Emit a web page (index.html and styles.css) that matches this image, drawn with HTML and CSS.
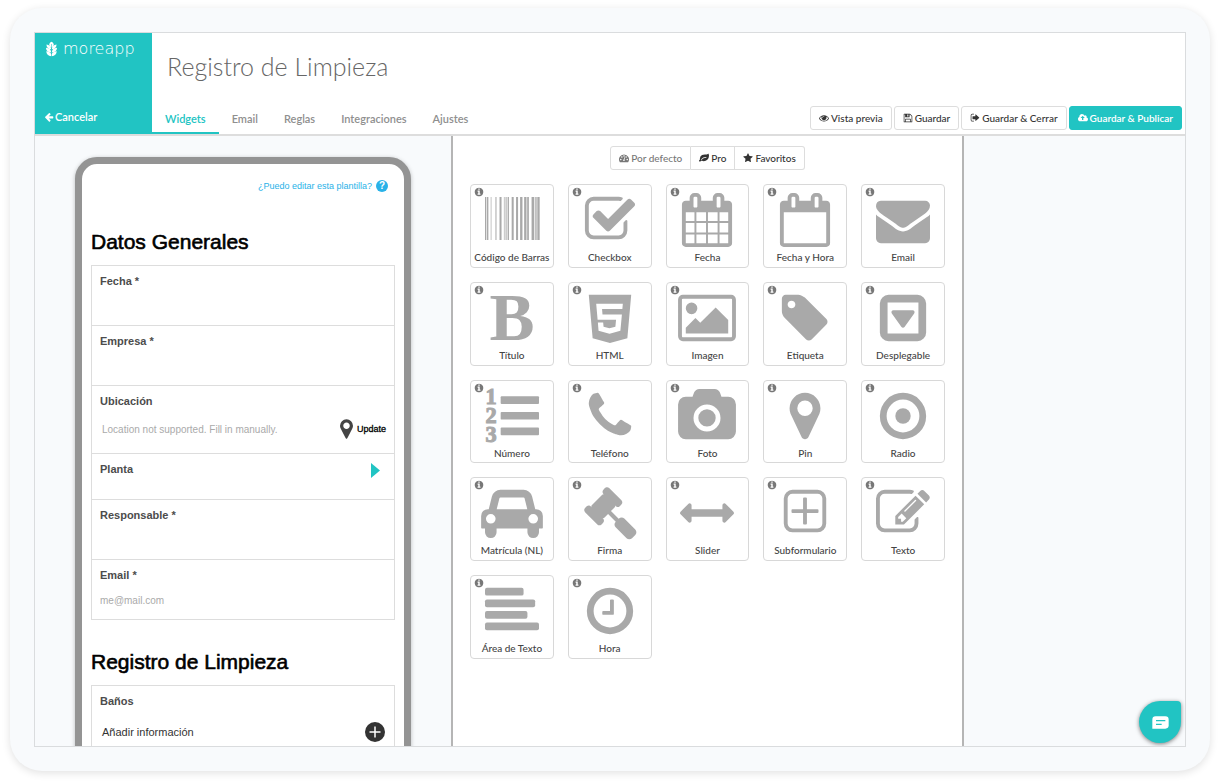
FILE: index.html
```html
<!DOCTYPE html>
<html lang="es">
<head>
<meta charset="utf-8">
<meta name="viewport" content="width=device-width, initial-scale=1">
<title>Registro de Limpieza</title>
<link rel="stylesheet" href="styles.css">
</head>
<body>
<svg class="sprite" aria-hidden="true">
  <symbol id="info" viewBox="0 0 1792 1792"><path d="M1152 1376v-160q0-14-9-23t-23-9h-96v-512q0-14-9-23t-23-9h-320q-14 0-23 9t-9 23v160q0 14 9 23t23 9h96v320h-96q-14 0-23 9t-9 23v160q0 14 9 23t23 9h448q14 0 23-9t9-23zm-128-896v-160q0-14-9-23t-23-9h-192q-14 0-23 9t-9 23v160q0 14 9 23t23 9h192q14 0 23-9t9-23zm640 416q0 209-103 385.5t-279.5 279.5-385.5 103-385.5-103-279.5-279.5-103-385.5 103-385.5 279.5-279.5 385.5-103 385.5 103 279.5 279.5 103 385.5z"/></symbol>
</svg>
<div class="card">
  <div class="window">
    <header class="header">
      <div class="brand">
        <div class="logo">
          <svg class="logo-mark" viewBox="0 0 24 32" aria-hidden="true">
            <path d="M12 0c3 1.500 5 4 5 6.500S15 11 12.600 12.500V5h-1.200v7.500C9 11 7 9 7 6.500S9 1.500 12 0z"/>
            <path d="M1 6c6 .5 10 4 10.300 10.500C5.500 16.300 1 12.500 1 6zM23 6c-6 .5-10 4-10.300 10.500C18.500 16.300 23 12.500 23 6z"/>
            <path d="M0 13.500c7 .3 11 4 11.300 10C5 23.500 0 20 0 13.500zM24 13.500c-7 .3-11 4-11.300 10C19 23.500 24 20 24 13.500z"/>
            <path d="M.5 21c6 .3 10.300 3 10.800 6.500V32C5 31 1 27 .5 21zM23.500 21c-6 .3-10.300 3-10.800 6.500V32c6.300-1 10.300-5 10.800-11z"/>
          </svg>
          <span>moreapp</span>
        </div>
        <a class="cancel" href="#"><svg viewBox="0 0 1792 1792" aria-hidden="true"><path d="M1664 896v128q0 53-32.500 90.500t-84.500 37.500h-704l293 294q38 36 38 90t-38 90l-75 76q-37 37-90 37-52 0-91-37l-651-652q-37-37-37-90 0-52 37-91l651-650q38-38 91-38 52 0 90 38l75 74q38 38 38 91t-38 91l-293 293h704q52 0 84.500 37.500t32.500 90.500z"/></svg>Cancelar</a>
      </div>
      <div class="head-main">
        <h1>Registro de Limpieza</h1>
        <div class="head-row">
          <nav class="tabs">
            <a class="active" href="#">Widgets</a><a href="#">Email</a><a href="#">Reglas</a><a href="#">Integraciones</a><a href="#">Ajustes</a>
          </nav>
          <div class="actions">
            <button type="button" class="btn"><svg viewBox="0 0 1792 1792" aria-hidden="true"><path d="M1664 960q-152-236-381-353 61 104 61 225 0 185-131.500 316.500t-316.500 131.500-316.500-131.500-131.500-316.500q0-121 61-225-229 117-381 353 133 205 333.500 326.500t434.500 121.500 434.500-121.500 333.500-326.500zm-720-384q0-20-14-34t-34-14q-125 0-214.500 89.500t-89.500 214.500q0 20 14 34t34 14 34-14 14-34q0-86 61-147t147-61q20 0 34-14t14-34zm848 384q0 34-20 69-140 230-376.500 368.500t-499.500 138.500-499.500-139-376.500-368q-20-35-20-69t20-69q140-229 376.500-368t499.500-139 499.500 139 376.500 368q20 35 20 69z"/></svg>Vista previa</button>
            <button type="button" class="btn"><svg viewBox="0 0 1792 1792" aria-hidden="true"><path fill-rule="evenodd" d="M224 128h960q80 0 136 56l288 288q56 56 56 136v960q0 96-96 96H224q-96 0-96-96V224q0-96 96-96zM256 256v1280h128v-416q0-96 96-96h832q96 0 96 96v416h128V608q0-28-20-48l-284-284q-20-20-48-20v416q0 96-96 96H480q-96 0-96-96V256zM512 1152v384h768v-384zM768 256v384h192V256z"/></svg>Guardar</button>
            <button type="button" class="btn"><svg viewBox="0 0 1792 1792" aria-hidden="true"><path d="M704 256H416a160 160 0 0 0-160 160v832a160 160 0 0 0 160 160h288v128H416a288 288 0 0 1-288-288V416a288 288 0 0 1 288-288h288z"/><path d="M1060 260l580 530q42 42 0 84l-580 530q-100 60-100-44v-256H512q-64 0-64-64V624q0-64 64-64h448V304q0-104 100-44z"/></svg>Guardar &amp; Cerrar</button>
            <button type="button" class="btn primary"><svg viewBox="-64 0 1920 1792" aria-hidden="true"><path d="M1216 864q0-14-9-23l-352-352q-9-9-23-9t-23 9l-351 351q-10 12-10 24 0 14 9 23t23 9h224v352q0 13 9.500 22.500t22.500 9.500h192q13 0 22.500-9.500t9.500-22.500v-352h224q13 0 22.500-9.500t9.500-22.500zm640 288q0 159-112.500 271.500t-271.500 112.500h-1088q-185 0-316.500-131.500t-131.500-316.500q0-130 70-240t188-165q-2-30-2-43 0-212 150-362t362-150q156 0 285.500 87t188.500 231q71-62 166-62 106 0 181 75t75 181q0 76-41 138 130 31 213.500 135.500t83.500 238.500z"/></svg>Guardar &amp; Publicar</button>
          </div>
        </div>
      </div>
    </header>

    <main class="workspace">
      <section class="preview">
        <form class="phone">
          <a class="help" href="#">¿Puedo editar esta plantilla?<span class="help-mark">?</span></a>
          <h2>Datos Generales</h2>
          <div class="group">
            <div class="field"><label for="fecha">Fecha *</label><input id="fecha" type="text"></div>
            <div class="field"><label for="empresa">Empresa *</label><input id="empresa" type="text"></div>
            <div class="field location">
              <label for="ubicacion">Ubicación</label>
              <div class="line">
                <input id="ubicacion" type="text" placeholder="Location not supported. Fill in manually.">
                <button type="button" class="update"><svg viewBox="384 128 1024 1536" aria-hidden="true"><path d="M1152 640q0-106-75-181t-181-75-181 75-75 181 75 181 181 75 181-75 75-181zm256 0q0 109-63 229l-364 724q-16 33-37.500 52t-47.500 19-47.500-19-36.500-52l-365-724q-63-120-63-229 0-212 150-362t362-150 362 150 150 362z"/></svg>Update</button>
              </div>
            </div>
            <div class="field planta"><span class="name">Planta</span><svg class="arrow" viewBox="0 0 9 15" aria-hidden="true"><path d="M0 0l9 7.500-9 7.500z"/></svg></div>
            <div class="field"><label for="responsable">Responsable *</label><input id="responsable" type="text"></div>
            <div class="field"><label for="correo">Email *</label><input id="correo" type="email" placeholder="me@mail.com"></div>
          </div>
          <h2>Registro de Limpieza</h2>
          <div class="group">
            <div class="field banos">
              <span class="name">Baños</span>
              <button type="button" class="add">Añadir información<svg viewBox="0 0 20 20" aria-hidden="true"><circle cx="10" cy="10" r="10"/><path d="M10 4.500v11M4.500 10h11"/></svg></button>
            </div>
          </div>
        </form>
      </section>

      <section class="palette">
        <div class="filters">
          <button type="button" class="current"><svg viewBox="0 0 1792 1792" aria-hidden="true"><path fill-rule="evenodd" d="M896 256a896 896 0 0 1 760 1370q-20 38-64 38H200q-44 0-64-38A896 896 0 0 1 896 256zM320 1024a128 128 0 1 0 .1 0zM512 576a128 128 0 1 0 .1 0zM896 384a128 128 0 1 0 .1 0zM1280 576a128 128 0 1 0 .1 0zM1472 1024a128 128 0 1 0 .1 0zM960 760l-100 400a140 140 0 1 0 120 30l100-400z"/></svg>Por defecto</button>
          <button type="button"><svg viewBox="0 0 1792 1792" aria-hidden="true"><path fill-rule="evenodd" d="M1740 250q50 100 52 240 0 450-300 740-260 250-640 250-160 0-320-70-90-40-150-40-40 0-110 90t-120 90q-60 0-100-60-52-80-52-120 0-50 90-120t90-110q-20-70-20-140 0-420 380-620 210-110 520-110 350 0 530-110 60-40 80-40 40 0 70 30zM1280 700q-560 0-900 400-40 50-40 80 0 50 60 50 30 0 60-30 330-360 820-370 64 0 64-64t-64-66z"/></svg>Pro</button>
          <button type="button"><svg viewBox="0 0 1792 1792" aria-hidden="true"><path d="M1728 647q0 22-26 48l-363 354 86 500q1 7 1 20 0 21-10.500 35.500t-30.500 14.500q-19 0-40-12l-449-236-449 236q-22 12-40 12-21 0-31.500-14.500t-10.500-35.500q0-6 2-20l86-500-364-354q-25-27-25-48 0-37 56-46l502-73 225-455q19-41 49-41t49 41l225 455 502 73q56 9 56 46z"/></svg>Favoritos</button>
        </div>
        <div class="tiles">
          <button type="button" class="tile"><svg class="info"><use href="#info"/></svg><svg class="icon" viewBox="46 28 160 160"><path d="M46 40h4v127h-4zM52 40h4v127h-4zM63 40h2v127h-2zM77 40h3v127h-3zM89 40h6v127h-6zM102 40h2v127h-2zM107 40h3v127h-3zM113 40h4v127h-4zM125 40h6v127h-6zM138 40h6v127h-6zM150 40h7v127h-7zM162 40h7v127h-7zM171 40h5v127h-5zM184 40h8v127h-8zM195 40h4v127h-4zM201 40h7v127h-7z"/></svg><span>Código de Barras</span></button>
          <button type="button" class="tile"><svg class="info"><use href="#info"/></svg><svg class="icon" viewBox="0 0 1792 1792"><path d="M1472 930v318q0 119-84.500 203.500t-203.500 84.500h-832q-119 0-203.500-84.500t-84.500-203.500v-832q0-119 84.500-203.500t203.500-84.500h832q63 0 117 25 15 7 18 23 3 17-9 29l-49 49q-10 10-23 10-3 0-9-2-23-6-45-6h-832q-66 0-113 47t-47 113v832q0 66 47 113t113 47h832q66 0 113-47t47-113v-254q0-13 9-22l64-64q10-10 23-10 6 0 12 3 20 8 20 29zm231-489l-814 814q-24 24-57 24t-57-24l-430-430q-24-24-24-57t24-57l110-110q24-24 57-24t57 24l263 263 647-647q24-24 57-24t57 24l110 110q24 24 24 57t-24 57z"/></svg><span>Checkbox</span></button>
          <button type="button" class="tile"><svg class="info"><use href="#info"/></svg><svg class="icon" viewBox="0 0 1792 1792"><path d="M192 1664h288v-288h-288v288zm352 0h320v-288h-320v288zm-352-352h288v-320h-288v320zm352 0h320v-320h-320v320zm-352-384h288v-288h-288v288zm736 736h320v-288h-320v288zm-384-736h320v-288h-320v288zm768 736h288v-288h-288v288zm-384-352h320v-320h-320v320zm-352-864v-288q0-13-9.500-22.500t-22.500-9.500h-64q-13 0-22.500 9.500t-9.500 22.500v288q0 13 9.500 22.500t22.500 9.500h64q13 0 22.500-9.500t9.500-22.500zm736 864h288v-320h-288v320zm-384-384h320v-288h-320v288zm384 0h288v-288h-288v288zm32-480v-288q0-13-9.500-22.500t-22.500-9.500h-64q-13 0-22.500 9.500t-9.500 22.500v288q0 13 9.500 22.500t22.500 9.500h64q13 0 22.500-9.500t9.500-22.500zm384-64v1280q0 52-38 90t-90 38h-1408q-52 0-90-38t-38-90v-1280q0-52 38-90t90-38h128v-96q0-66 47-113t113-47h64q66 0 113 47t47 113v96h384v-96q0-66 47-113t113-47h64q66 0 113 47t47 113v96h128q52 0 90 38t38 90z"/></svg><span>Fecha</span></button>
          <button type="button" class="tile"><svg class="info"><use href="#info"/></svg><svg class="icon" viewBox="0 0 1792 1792"><path d="M192 1664h1408v-1024h-1408v1024zm384-1216v-288q0-14-9-23t-23-9h-64q-14 0-23 9t-9 23v288q0 14 9 23t23 9h64q14 0 23-9t9-23zm768 0v-288q0-14-9-23t-23-9h-64q-14 0-23 9t-9 23v288q0 14 9 23t23 9h64q14 0 23-9t9-23zm384-64v1280q0 52-38 90t-90 38h-1408q-52 0-90-38t-38-90v-1280q0-52 38-90t90-38h128v-96q0-66 47-113t113-47h64q66 0 113 47t47 113v96h384v-96q0-66 47-113t113-47h64q66 0 113 47t47 113v96h128q52 0 90 38t38 90z"/></svg><span>Fecha y Hora</span></button>
          <button type="button" class="tile"><svg class="info"><use href="#info"/></svg><svg class="icon" viewBox="0 0 1792 1792"><path d="M1792 710v794q0 66-47 113t-113 47h-1472q-66 0-113-47t-47-113v-794q44 49 101 87 362 246 497 345 57 42 92.500 65.500t94.500 48 110 24.500h2q51 0 110-24.500t94.500-48 92.500-65.500q170-123 498-345 57-39 100-87zm0-294q0 79-49 151t-122 123q-376 261-468 325-10 7-42.500 31t-54 38.500-52 32.500-57.500 27-50 9h-2q-23 0-50-9t-57.500-27-52-32.500-54-38.500-42.500-31q-91-64-262-182.500t-205-142.500q-62-42-117-115.500t-55-136.500q0-78 41.500-130t118.500-52h1472q65 0 112.500 47t47.500 113z"/></svg><span>Email</span></button>

          <button type="button" class="tile"><svg class="info"><use href="#info"/></svg><svg class="icon" viewBox="0 0 1792 1792"><text class="bold-mark" x="896" y="1640">B</text></svg><span>Título</span></button>
          <button type="button" class="tile"><svg class="info"><use href="#info"/></svg><svg class="icon" viewBox="0 0 1792 1792"><path d="M1322 422H438l47 534h612l-22 228-197 53-196-53-13-140H494l22 278 362 100h4v-1l359-99 50-544H647l-15-181h674zM192 128h1408l-128 1438-578 162-574-162z"/></svg><span>HTML</span></button>
          <button type="button" class="tile"><svg class="info"><use href="#info"/></svg><svg class="icon" viewBox="0 0 1792 1792"><path d="M576 576q0 80-56 136t-136 56-136-56-56-136 56-136 136-56 136 56 56 136zm1024 384v448h-1408v-192l320-320 160 160 512-512zm96-704h-1600q-13 0-22.500 9.500t-9.500 22.500v1216q0 13 9.500 22.500t22.500 9.500h1600q13 0 22.500-9.500t9.500-22.500v-1216q0-13-9.500-22.500t-22.500-9.500zm160 32v1216q0 66-47 113t-113 47h-1600q-66 0-113-47t-47-113v-1216q0-66 47-113t113-47h1600q66 0 113 47t47 113z"/></svg><span>Imagen</span></button>
          <button type="button" class="tile"><svg class="info"><use href="#info"/></svg><svg class="icon" viewBox="0 0 1792 1792"><path d="M576 448q0-53-37.500-90.500t-90.500-37.500-90.500 37.500-37.500 90.500 37.500 90.500 90.500 37.500 90.500-37.500 37.500-90.500zm1067 576q0 53-37 90l-491 492q-39 37-91 37-53 0-90-37l-715-716q-38-37-64.500-101t-26.500-117v-416q0-52 38-90t90-38h416q53 0 117 26.500t102 64.500l715 714q37 39 37 91z"/></svg><span>Etiqueta</span></button>
          <button type="button" class="tile"><svg class="info"><use href="#info"/></svg><svg class="icon" viewBox="0 0 1792 1792"><path fill-rule="evenodd" d="M416 128h960a288 288 0 0 1 288 288v960a288 288 0 0 1-288 288H416a288 288 0 0 1-288-288V416a288 288 0 0 1 288-288zM384 384v1024h1024V384z"/><path d="M576 640h640q40 0 57 35 18 35-6 68l-320 448q-19 27-51 27t-51-27l-320-448q-24-33-6-68 17-35 57-35z"/></svg><span>Desplegable</span></button>

          <button type="button" class="tile"><svg class="info"><use href="#info"/></svg><svg class="icon" viewBox="0 0 1792 1792"><g class="digits"><text x="200" y="500">1</text><text x="200" y="1136">2</text><text x="200" y="1764">3</text></g><rect x="520" y="240" width="1272" height="256" rx="32"/><rect x="520" y="760" width="1272" height="256" rx="32"/><rect x="520" y="1276" width="1272" height="256" rx="32"/></svg><span>Número</span></button>
          <button type="button" class="tile"><svg class="info"><use href="#info"/></svg><svg class="icon" viewBox="0 0 1792 1792"><path d="M1600 1240q0 27-10 70.500t-21 68.500q-21 50-122 106-94 51-186 51-27 0-53-3.500t-57.500-12.500-47-14.500-55.500-20.500-49-18q-98-35-175-83-127-79-264-216t-216-264q-48-77-83-175-3-9-18-49t-20.500-55.500-14.500-47-12.500-57.500-3.500-53q0-92 51-186 56-101 106-122 25-11 68.500-21t70.500-10q14 0 21 3 18 6 53 76 11 19 30 54t35 63.500 31 53.500q3 4 17.500 25t21.500 35.500 7 28.500q0 20-28.500 50t-62 55-62 53-28.500 46q0 9 5 22.500t8.500 20.500 14 24 11.500 19q76 137 174 235t235 174q2 1 19 11.500t24 14 20.500 8.500 22.500 5q18 0 46-28.500t53-62 55-62 50-28.500q14 0 28.500 7t35.500 21.500 25 17.500q25 15 53.500 31t63.500 35 54 30q70 35 76 53 3 7 3 21z"/></svg><span>Teléfono</span></button>
          <button type="button" class="tile"><svg class="info"><use href="#info"/></svg><svg class="icon" viewBox="0 0 1792 1792"><path d="M896 672q119 0 203.500 84.500t84.500 203.500-84.500 203.500-203.500 84.500-203.500-84.500-84.500-203.500 84.500-203.500 203.500-84.500zm704-416q106 0 181 75t75 181v896q0 106-75 181t-181 75h-1408q-106 0-181-75t-75-181v-896q0-106 75-181t181-75h224l51-136q19-49 69.500-84.500t103.500-35.500h512q53 0 103.500 35.500t69.500 84.500l51 136h224zm-704 1152q185 0 316.500-131.500t131.500-316.500-131.500-316.500-316.500-131.500-316.500 131.500-131.500 316.500 131.500 316.500 316.500 131.500z"/></svg><span>Foto</span></button>
          <button type="button" class="tile"><svg class="info"><use href="#info"/></svg><svg class="icon" viewBox="0 0 1792 1792"><path d="M1152 640q0-106-75-181t-181-75-181 75-75 181 75 181 181 75 181-75 75-181zm256 0q0 109-33 179l-364 774q-16 33-47.500 52t-67.500 19-67.500-19-46.500-52l-365-774q-33-70-33-179 0-212 150-362t362-150 362 150 150 362z"/></svg><span>Pin</span></button>
          <button type="button" class="tile"><svg class="info"><use href="#info"/></svg><svg class="icon" viewBox="0 0 1792 1792"><circle class="ring" cx="896" cy="896" r="656"/><circle cx="896" cy="896" r="256"/></svg><span>Radio</span></button>

          <button type="button" class="tile"><svg class="info"><use href="#info"/></svg><svg class="icon" viewBox="128 0 1792 1792"><path d="M480 1088q0-66-47-113t-113-47-113 47-47 113 47 113 113 47 113-47 47-113zm36-320h1016l-89-357q-2-8-14-17.500t-21-9.500h-768q-9 0-21 9.500t-14 17.500zm1372 320q0-66-47-113t-113-47-113 47-47 113 47 113 113 47 113-47 47-113zm160-96v384q0 14-9 23t-23 9h-96v128q0 80-56 136t-136 56-136-56-56-136v-128h-1024v128q0 80-56 136t-136 56-136-56-56-136v-128h-96q-14 0-23-9t-9-23v-384q0-93 65.500-158.500t158.500-65.500h28l105-419q23-94 104-157.500t179-63.500h768q98 0 179 63.500t104 157.500l105 419h28q93 0 158.500 65.500t65.500 158.500z"/></svg><span>Matrícula (NL)</span></button>
          <button type="button" class="tile"><svg class="info"><use href="#info"/></svg><svg class="icon" viewBox="0 0 1792 1792"><path d="M1771 1536q0 53-37 90l-107 108q-39 37-91 37-53 0-90-37l-363-364q-38-36-38-90 0-53 43-96l-256-256-126 126q-14 14-34 14t-34-14q2 2 12.500 12t12.500 13 10 11.500 10 13.500 6 13.500 5.500 16.500 1.500 18q0 38-28 68-3 3-16.500 18t-19 20.500-18.500 16.500-22 15.500-22 9-26 4.500q-40 0-68-28l-408-408q-28-28-28-68 0-13 4.500-26t9-22 15.500-22 16.500-18.500 20.500-19 18-16.500q30-28 68-28 10 0 18 1.500t16.500 5.500 13.500 6 13.500 10 11.500 10 13 12.500 12 12.500q-14-14-14-34t14-34l348-348q14-14 34-14t34 14q-2-2-12.500-12t-12.500-13-10-11.500-10-13.500-6-13.500-5.500-16.500-1.500-18q0-38 28-68 3-3 16.500-18t19-20.500 18.500-16.500 22-15.500 22-9 26-4.500q40 0 68 28l408 408q28 28 28 68 0 13-4.500 26t-9 22-15.500 22-16.500 18.500-20.500 19-18 16.500q-30 28-68 28-10 0-18-1.500t-16.500-5.500-13.500-6-13.500-10-11.500-10-13-12.500-12-12.500q14 14 14 34t-14 34l-126 126 256 256q43-43 96-43 52 0 91 37l363 363q37 39 37 91z"/></svg><span>Firma</span></button>
          <button type="button" class="tile"><svg class="info"><use href="#info"/></svg><svg class="icon" viewBox="0 0 1792 1792"><path d="M1792 896q0 26-19 45l-256 256q-19 19-45 19t-45-19-19-45v-128h-1024v128q0 26-19 45t-45 19-45-19l-256-256q-19-19-19-45t19-45l256-256q19-19 45-19t45 19 19 45v128h1024v-128q0-26 19-45t45-19 45 19l256 256q19 19 19 45z"/></svg><span>Slider</span></button>
          <button type="button" class="tile"><svg class="info"><use href="#info"/></svg><svg class="icon" viewBox="0 0 1792 1792"><rect class="outline" x="256" y="192" width="1280" height="1280" rx="224"/><path d="M832 416q0-32 32-32h64q32 0 32 32v352h352q32 0 32 32v64q0 32-32 32H960v352q0 32-32 32h-64q-32 0-32-32V896H480q-32 0-32-32v-64q0-32 32-32h352z"/></svg><span>Subformulario</span></button>
          <button type="button" class="tile"><svg class="info"><use href="#info"/></svg><svg class="icon" viewBox="0 0 1792 1792"><path d="M888 1184l116-116-152-152-116 116v56h96v96h56zm440-720q-16-16-33 1l-350 350q-17 17-1 33t33-1l350-350q17-17 1-33zm80 594v190q0 119-84.500 203.500t-203.500 84.500h-832q-119 0-203.500-84.500t-84.500-203.500v-832q0-119 84.500-203.500t203.500-84.500h832q63 0 117 25 15 7 18 23 3 17-9 29l-49 49q-14 14-32 8-23-6-45-6h-832q-66 0-113 47t-47 113v832q0 66 47 113t113 47h832q66 0 113-47t47-113v-126q0-13 9-22l64-64q15-15 35-7t20 29zm-96-738l288 288-672 672h-288v-288zm444 132l-92 92-288-288 92-92q28-28 68-28t68 28l152 152q28 28 28 68t-28 68z"/></svg><span>Texto</span></button>

          <button type="button" class="tile"><svg class="info"><use href="#info"/></svg><svg class="icon" viewBox="0 0 1792 1792"><rect y="128" width="1280" height="256" rx="64"/><rect y="512" width="1664" height="256" rx="64"/><rect y="896" width="1408" height="256" rx="64"/><rect y="1280" width="1792" height="256" rx="64"/></svg><span>Área de Texto</span></button>
          <button type="button" class="tile"><svg class="info"><use href="#info"/></svg><svg class="icon" viewBox="0 0 1792 1792"><circle class="ring" cx="896" cy="896" r="656"/><path d="M1024 544v448q0 14-9 23t-23 9h-320q-14 0-23-9t-9-23v-64q0-14 9-23t23-9h224v-352q0-14 9-23t23-9h64q14 0 23 9t9 23z"/></svg><span>Hora</span></button>
        </div>
      </section>
    </main>

    <button type="button" class="chat" aria-label="Chat"><svg viewBox="0 0 51 39" aria-hidden="true"><path class="bubble" d="M11 1h29q10 0 10 10v17q0 10-10 10H1V11Q1 1 11 1z"/><path class="lines" d="M12 14h28M12 25h17"/></svg></button>
  </div>
</div>
</body>
</html>
```
FILE: styles.css
```css
*, *::before, *::after { box-sizing: border-box; }

body {
  margin: 0;
  height: 100vh;
  padding: 8px 10px 12px;
  background: #fff;
  font-family: Lato, sans-serif;
  color: #333;
  overflow: hidden;
}

button {
  font: inherit;
  color: inherit;
  margin: 0;
  cursor: pointer;
}

a { text-decoration: none; }
svg { fill: currentColor; }
.sprite { display: none; }

.card {
  height: 100%;
  padding: 24px;
  border-radius: 32px;
  background: #f8fafc;
  box-shadow: 0 2px 8px rgba(0, 0, 0, 0.12);
}

.window {
  position: relative;
  display: flex;
  flex-direction: column;
  height: 100%;
  border: 1px solid #dadcde;
  overflow: hidden;
}

/* Header */
.header {
  display: flex;
  height: 103px;
  flex: none;
  background: #fff;
  border-bottom: 2px solid #ddd;
}

.brand {
  display: flex;
  flex-direction: column;
  justify-content: space-between;
  width: 117px;
  padding: 7px 9px 10px;
  background: #21c4c3;
  color: #fff;
}

.logo {
  display: flex;
  align-items: center;
  gap: 6px;
  padding-left: 2px;
  font-family: "DejaVu Sans Light", "DejaVu Sans", sans-serif;
  font-size: 16px;
  font-weight: 200;
  line-height: 18px;
}

.logo-mark { width: 11px; height: 16px; }

.cancel {
  display: flex;
  align-items: center;
  gap: 1px;
  font-size: 11px;
  font-weight: 600;
  line-height: 14px;
  color: #fff;
}

.cancel svg { width: 10px; height: 10px; }

.head-main {
  display: flex;
  flex: 1;
  flex-direction: column;
  justify-content: space-between;
  min-width: 0;
}

h1 {
  margin: 0;
  padding: 15px 15px 0;
  font-size: 25px;
  font-weight: 300;
  line-height: 36px;
  color: #666;
}

.head-row {
  display: flex;
  align-items: flex-end;
  justify-content: space-between;
}

.tabs { display: flex; }

.tabs a {
  padding: 0 13px 5px;
  border-bottom: 2px solid transparent;
  font-size: 11px;
  font-weight: 600;
  line-height: 16px;
  color: #8f8f8f;
}

.tabs .active {
  border-color: #21c4c3;
  color: #21c4c3;
}

.actions {
  display: flex;
  gap: 2px;
  padding: 0 3px 4px 0;
}

.btn {
  display: flex;
  align-items: center;
  gap: 2px;
  height: 24px;
  padding: 0 8px;
  border: 1px solid #ddd;
  border-radius: 3px;
  background: #fff;
  font-size: 10px;
  font-weight: 500;
  white-space: nowrap;
}

.btn svg, .filters svg { width: 10px; height: 10px; }

.primary {
  border-color: #21c4c3;
  background: #21c4c3;
  color: #fff;
  font-weight: 600;
}

/* Workspace */
.workspace {
  display: grid;
  grid-template-columns: 416px 513px minmax(0, 1fr);
  flex: 1;
  min-height: 0;
  overflow: hidden;
}

.preview { padding: 21px 40px 0; }

.phone {
  padding: 14px 9px 40px;
  border: 7px solid #949494;
  border-radius: 22px;
  background: #fff;
  box-shadow: 0 1px 4px rgba(0, 0, 0, 0.25);
  font-family: "Liberation Sans", Arial, sans-serif;
}

.help {
  display: flex;
  align-items: center;
  justify-content: flex-end;
  gap: 4px;
  padding-right: 7px;
  font-size: 9px;
  line-height: 16px;
  color: #29b2e8;
}

.help-mark {
  width: 12px;
  height: 12px;
  border-radius: 50%;
  background: #29b2e8;
  color: #fff;
  font-size: 10px;
  font-weight: 700;
  line-height: 12px;
  text-align: center;
}

h2 {
  margin: 0;
  padding: 28px 0 10px;
  font-size: 21px;
  font-weight: 400;
  line-height: 27px;
  color: #000;
  -webkit-text-stroke: 0.6px #000;
}

.help + h2 { padding-top: 34px; }

.group { border: 1px solid #ddd; }

.field {
  display: flex;
  flex-direction: column;
  height: 60px;
  padding: 7px 8px;
}

.field:first-child { height: 59px; }
.field + .field { border-top: 1px solid #ddd; }

.field label, .name {
  font-size: 11px;
  font-weight: 700;
  line-height: 16px;
  color: #4c4c4c;
}

.field input {
  width: 100%;
  height: 20px;
  margin-top: 7px;
  padding: 0;
  border: 0;
  outline: 0;
  background: none;
  font-family: inherit;
  font-size: 10px;
  color: #444;
}

.field input::placeholder { color: #aaa; opacity: 1; }

.field.location { height: 68px; }

.line {
  display: flex;
  align-items: center;
  padding-left: 2px;
  margin-top: 10px;
}

.line input { flex: 1; min-width: 0; margin: 0; }

.update {
  display: flex;
  align-items: center;
  gap: 4px;
  padding: 0;
  border: 0;
  background: none;
  font-size: 9px;
  color: #000;
  -webkit-text-stroke: 0.3px #000;
}

.update svg { width: 13px; height: 20px; fill: #444; }

.field.planta {
  flex-direction: row;
  justify-content: space-between;
  height: 46px;
}

.arrow { width: 9px; height: 15px; margin: 2px 6px; fill: #21c4c3; }

.field.banos { height: 76px; }

.add {
  display: flex;
  align-items: center;
  justify-content: space-between;
  margin-top: 13px;
  padding: 0 1px 0 2px;
  border: 0;
  background: none;
  font-size: 11px;
  line-height: 20px;
  color: #333;
}

.add svg { width: 20px; height: 20px; }
.add path { fill: none; stroke: #fff; stroke-width: 1.5; }

/* Widget palette */
.palette {
  padding: 10px 17px 0;
  border: solid #b5b5b5;
  border-width: 0 2px;
  background: #fff;
}

.filters {
  display: flex;
  justify-content: center;
}

.filters button {
  display: flex;
  align-items: center;
  gap: 2px;
  height: 24px;
  padding: 0 8px;
  border: 1px solid #ddd;
  background: #fff;
  font-size: 10px;
  font-weight: 500;
}

.filters button + button { border-left: 0; }
.filters button:first-child { border-radius: 3px 0 0 3px; }
.filters button:last-child { border-radius: 0 3px 3px 0; }
.filters .current { color: #777; }

.tiles {
  display: grid;
  grid-template-columns: repeat(5, minmax(0, 1fr));
  gap: 14px;
  margin-top: 14px;
}

.tile {
  position: relative;
  display: flex;
  flex-direction: column;
  align-items: center;
  aspect-ratio: 1;
  padding: 8px 0 0;
  border: 1px solid #d8d8d8;
  border-radius: 4px;
  background: #fff;
  font-size: 10px;
  font-weight: 500;
  line-height: 12px;
  color: #444;
  white-space: nowrap;
}

.info {
  position: absolute;
  top: 2px;
  left: 3px;
  width: 10px;
  height: 10px;
  color: #777;
}

.icon {
  width: 54px;
  height: 54px;
  margin-bottom: 4px;
  flex: none;
  overflow: visible;
  color: #a9a9a9;
}

.ring { fill: none; stroke: currentColor; stroke-width: 224; }
.outline { fill: none; stroke: currentColor; stroke-width: 128; }

.bold-mark, .digits {
  font-family: "Liberation Serif", serif;
  font-weight: 700;
  text-anchor: middle;
}

.bold-mark { font-size: 2240px; }
.digits { font-size: 740px; stroke: currentColor; stroke-width: 36px; }

/* Chat launcher */
.chat {
  position: absolute;
  right: 4px;
  bottom: 3px;
  display: grid;
  place-items: center;
  width: 42px;
  height: 42px;
  padding: 0;
  border: 0;
  border-radius: 50% 4px 50% 50%;
  background: #21c4c3;
  box-shadow: 0 1px 4px rgba(0, 0, 0, 0.5);
}

.chat svg { width: 17px; height: 13px; }
.bubble { fill: #fff; }
.lines { fill: none; stroke: #21c4c3; stroke-width: 4; }
```
